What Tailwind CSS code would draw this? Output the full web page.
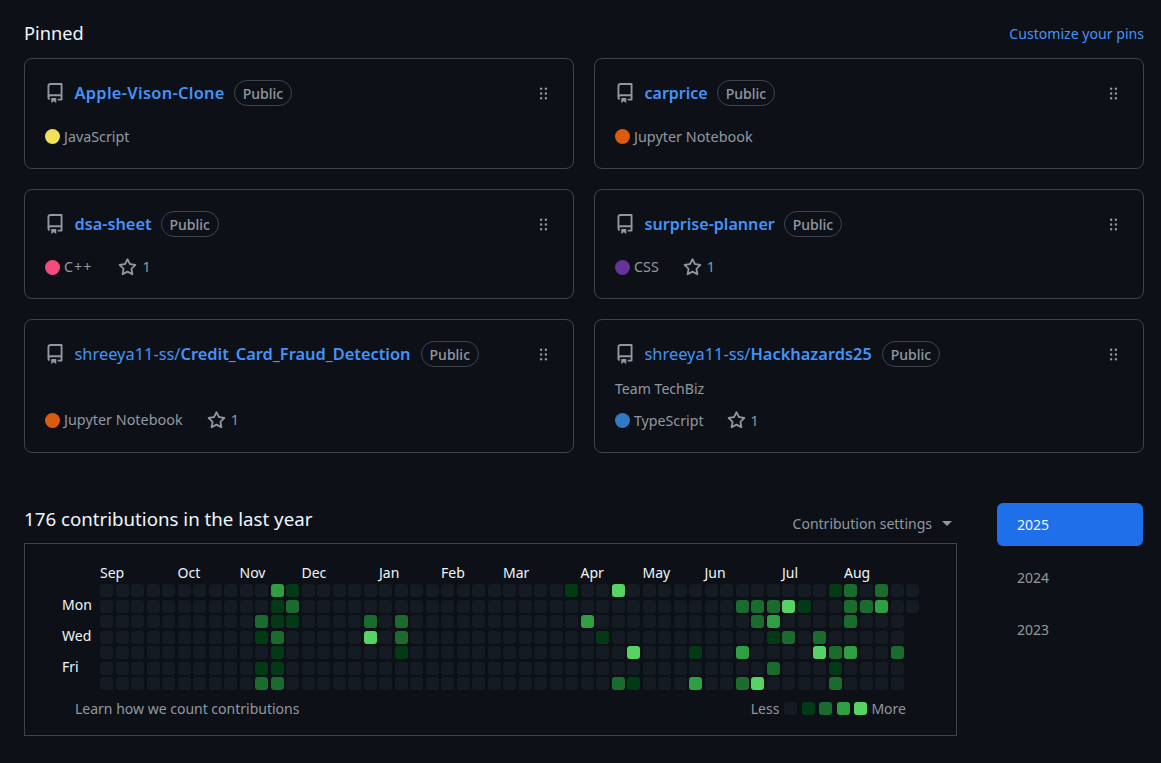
<!DOCTYPE html>
<html lang="en">
<head>
  <meta charset="UTF-8">
  <meta name="viewport" content="width=device-width, initial-scale=1.0">
  <title>Pinned and contributions</title>
  <script src="https://cdn.jsdelivr.net/npm/@tailwindcss/browser@4"></script>
</head>
<body class="bg-[#0d1117] h-[763px] overflow-hidden font-['Noto_Sans',sans-serif] text-[#9198a1]">
  <svg class="hidden">
    <symbol id="repo" viewBox="0 0 16 16"><path fill="currentColor" d="M2 2.5A2.5 2.5 0 0 1 4.5 0h8.75a.75.75 0 0 1 .75.75v12.5a.75.75 0 0 1-.75.75h-2.5a.75.75 0 0 1 0-1.5h1.75v-2h-8a1 1 0 0 0-.714 1.7.75.75 0 1 1-1.072 1.05A2.495 2.495 0 0 1 2 11.5Zm10.5-1h-8a1 1 0 0 0-1 1v6.708A2.486 2.486 0 0 1 4.5 9h8ZM5 12.25a.25.25 0 0 1 .25-.25h3.5a.25.25 0 0 1 .25.25v3.25a.25.25 0 0 1-.4.2l-1.45-1.087a.249.249 0 0 0-.3 0L5.4 15.7a.25.25 0 0 1-.4-.2Z"/></symbol>
    <symbol id="star" viewBox="0 0 16 16"><path fill="currentColor" d="M8 .25a.75.75 0 0 1 .673.418l1.882 3.815 4.21.612a.75.75 0 0 1 .416 1.279l-3.046 2.97.719 4.192a.751.751 0 0 1-1.088.791L8 12.347l-3.766 1.98a.75.75 0 0 1-1.088-.79l.72-4.194L.818 6.374a.75.75 0 0 1 .416-1.28l4.21-.611L7.327.668A.75.75 0 0 1 8 .25Zm0 2.445L6.615 5.5a.75.75 0 0 1-.564.41l-3.097.45 2.24 2.184a.75.75 0 0 1 .216.664l-.528 3.084 2.769-1.456a.75.75 0 0 1 .698 0l2.77 1.456-.53-3.084a.75.75 0 0 1 .216-.664l2.24-2.183-3.096-.45a.75.75 0 0 1-.564-.41L8 2.694Z"/></symbol>
    <symbol id="grip" viewBox="0 0 16 16"><path fill="currentColor" d="M10 13a1 1 0 1 1 0-2 1 1 0 0 1 0 2Zm0-4a1 1 0 1 1 0-2 1 1 0 0 1 0 2Zm-4 4a1 1 0 1 1 0-2 1 1 0 0 1 0 2Zm5-9a1 1 0 1 1-2 0 1 1 0 0 1 2 0ZM7 8a1 1 0 1 1-2 0 1 1 0 0 1 2 0ZM6 5a1 1 0 1 1 0-2 1 1 0 0 1 0 2Z"/></symbol>
  </svg>

  <main class="pl-6 w-[1144px]">
    <div class="flex justify-between items-center h-[58px] pt-[9px]">
      <h2 class="text-[18.2px] text-[#f0f6fc]">Pinned</h2>
      <a class="text-[14.1px] text-[#4493f8]">Customize your pins</a>
    </div>

    <div class="grid grid-cols-2 gap-x-5 gap-y-5">
      <!-- baris 1 -->
      <div class="h-[111px] border border-[#3d444d] rounded-lg px-5 pt-5">
        <div class="flex items-center h-7">
          <svg class="w-5 h-5 mr-[9.5px]"><use href="#repo"/></svg>
          <a class="text-[16.4px] tracking-[0.3px] font-semibold text-[#4493f8]">Apple-Vison-Clone</a>
          <span class="ml-[9px] h-[26px] px-2 flex items-center border border-[#3d444d] rounded-full text-[14px] font-medium">Public</span>
          <svg class="w-[19px] h-[19px] ml-auto"><use href="#grip"/></svg>
        </div>
        <div class="flex items-center h-5 mt-[19.5px] text-[14.3px]">
          <span class="w-[15px] h-[15px] rounded-full bg-[#f1e05a] mr-1"></span>JavaScript
        </div>
      </div>
      <div class="h-[111px] border border-[#3d444d] rounded-lg px-5 pt-5">
        <div class="flex items-center h-7">
          <svg class="w-5 h-5 mr-[9.5px]"><use href="#repo"/></svg>
          <a class="text-[16px] font-semibold text-[#4493f8]">carprice</a>
          <span class="ml-[9px] h-[26px] px-2 flex items-center border border-[#3d444d] rounded-full text-[14px] font-medium">Public</span>
          <svg class="w-[19px] h-[19px] ml-auto"><use href="#grip"/></svg>
        </div>
        <div class="flex items-center h-5 mt-[19.5px] text-[14.4px]">
          <span class="w-[15px] h-[15px] rounded-full bg-[#da5b0b] mr-1"></span>Jupyter Notebook
        </div>
      </div>

      <!-- baris 2 -->
      <div class="h-[110px] border border-[#3d444d] rounded-lg px-5 pt-5">
        <div class="flex items-center h-7">
          <svg class="w-5 h-5 mr-[9.5px]"><use href="#repo"/></svg>
          <a class="text-[16.3px] font-semibold text-[#4493f8]">dsa-sheet</a>
          <span class="ml-[9px] h-[26px] px-2 flex items-center border border-[#3d444d] rounded-full text-[14px] font-medium">Public</span>
          <svg class="w-[19px] h-[19px] ml-auto"><use href="#grip"/></svg>
        </div>
        <div class="flex items-center h-5 mt-[19px] text-[14.3px]">
          <span class="w-[15px] h-[15px] rounded-full bg-[#f34b7d] mr-1"></span><span class="tracking-[1px]">C++</span>
          <svg class="w-[19px] h-[19px] ml-[26px] mr-[5px]"><use href="#star"/></svg>1
        </div>
      </div>
      <div class="h-[110px] border border-[#3d444d] rounded-lg px-5 pt-5">
        <div class="flex items-center h-7">
          <svg class="w-5 h-5 mr-[9.5px]"><use href="#repo"/></svg>
          <a class="text-[16.1px] font-semibold text-[#4493f8]">surprise-planner</a>
          <span class="ml-[9px] h-[26px] px-2 flex items-center border border-[#3d444d] rounded-full text-[14px] font-medium">Public</span>
          <svg class="w-[19px] h-[19px] ml-auto"><use href="#grip"/></svg>
        </div>
        <div class="flex items-center h-5 mt-[19px] text-[14.3px]">
          <span class="w-[15px] h-[15px] rounded-full bg-[#663399] mr-1"></span>CSS
          <svg class="w-[19px] h-[19px] ml-[24px] mr-[5px]"><use href="#star"/></svg>1
        </div>
      </div>

      <!-- baris 3 -->
      <div class="h-[134px] border border-[#3d444d] rounded-lg px-5 pt-5">
        <div class="flex items-center h-7">
          <svg class="w-5 h-5 mr-[9.5px]"><use href="#repo"/></svg>
          <a class="text-[16.4px] text-[#4493f8]">shreeya11-ss/<span class="font-semibold">Credit_Card_Fraud_Detection</span></a>
          <span class="ml-[10px] h-[26px] px-2 flex items-center border border-[#3d444d] rounded-full text-[14px] font-medium">Public</span>
          <svg class="w-[19px] h-[19px] ml-auto"><use href="#grip"/></svg>
        </div>
        <div class="flex items-center h-5 mt-[42px] text-[14.4px]">
          <span class="w-[15px] h-[15px] rounded-full bg-[#da5b0b] mr-1"></span>Jupyter Notebook
          <svg class="w-[19px] h-[19px] ml-[24px] mr-[5px]"><use href="#star"/></svg>1
        </div>
      </div>
      <div class="h-[134px] border border-[#3d444d] rounded-lg px-5 pt-5">
        <div class="flex items-center h-7">
          <svg class="w-5 h-5 mr-[9.5px]"><use href="#repo"/></svg>
          <a class="text-[16.4px] text-[#4493f8]">shreeya11-ss/<span class="font-semibold">Hackhazards25</span></a>
          <span class="ml-[10px] h-[26px] px-2 flex items-center border border-[#3d444d] rounded-full text-[14px] font-medium">Public</span>
          <svg class="w-[19px] h-[19px] ml-auto"><use href="#grip"/></svg>
        </div>
        <p class="h-5 mt-[10.5px] text-[14.1px] leading-5">Team TechBiz</p>
        <div class="flex items-center h-5 mt-[12px] text-[14.2px]">
          <span class="w-[15px] h-[15px] rounded-full bg-[#3178c6] mr-1"></span>TypeScript
          <svg class="w-[19px] h-[19px] ml-[23px] mr-[5px]"><use href="#star"/></svg>1
        </div>
      </div>
    </div>

    <div class="flex mt-[50px]">
      <div class="w-[933px]">
        <div class="flex justify-between items-center h-[40px]">
          <h2 class="text-[18.7px] text-[#f0f6fc] mb-2">176 contributions in the last year</h2>
          <div class="flex items-center text-[14px] mr-[5px]">
            Contribution settings
            <span class="ml-[10px] w-0 h-0 border-x-[5px] border-x-transparent border-t-[5px] border-t-[#9198a1]"></span>
          </div>
        </div>
        <div class="h-[193px] border border-[#3d444d] pt-[19px]">
          <div class="flex">
            <div class="w-[75px] shrink-0 pt-[34px] text-[14px] text-[#f0f6fc] pl-[37px]">
              <div class="h-[15.5px] leading-[15.5px] mb-[15.5px]">Mon</div>
              <div class="h-[15.5px] leading-[15.5px] mb-[15.5px]">Wed</div>
              <div class="h-[15.5px] leading-[15.5px]">Fri</div>
            </div>
            <div>
              <div class="grid grid-cols-[repeat(53,13px)] gap-x-[2.5px] h-[21px] text-[14px] leading-5 text-[#f0f6fc] whitespace-nowrap">
                <span class="col-start-[1]">Sep</span>
                <span class="col-start-[6]">Oct</span>
                <span class="col-start-[10]">Nov</span>
                <span class="col-start-[14]">Dec</span>
                <span class="col-start-[19]">Jan</span>
                <span class="col-start-[23]">Feb</span>
                <span class="col-start-[27]">Mar</span>
                <span class="col-start-[32]">Apr</span>
                <span class="col-start-[36]">May</span>
                <span class="col-start-[40]">Jun</span>
                <span class="col-start-[45]">Jul</span>
                <span class="col-start-[49]">Aug</span>
              </div>
              <div id="graph" class="grid grid-flow-col grid-rows-[repeat(7,13px)] grid-cols-[repeat(53,13px)] gap-x-[2.5px] gap-y-[2.5px]"></div>
            </div>
          </div>
          <div class="flex justify-between items-center text-[14px] h-5 mt-2 pl-[50px] pr-[50px]">
            <span>Learn how we count contributions</span>
            <div class="flex items-center">
              <span class="mr-[5px]">Less</span>
              <span class="w-[13px] h-[13px] rounded-[3px] bg-[#151b23] mr-[4.5px]"></span>
              <span class="w-[13px] h-[13px] rounded-[3px] bg-[#033a16] mr-[4.5px]"></span>
              <span class="w-[13px] h-[13px] rounded-[3px] bg-[#196c2e] mr-[4.5px]"></span>
              <span class="w-[13px] h-[13px] rounded-[3px] bg-[#2ea043] mr-[4.5px]"></span>
              <span class="w-[13px] h-[13px] rounded-[3px] bg-[#56d364]"></span>
              <span class="ml-[4px]">More</span>
            </div>
          </div>
        </div>
      </div>

      <nav class="ml-[40px] w-[146px] text-[14px]">
        <a class="flex items-center h-[43px] pl-5 rounded-md bg-[#1f6feb] text-[#f0f6fc]">2025</a>
        <a class="flex items-center h-[43px] pl-5 mt-[10px]">2024</a>
        <a class="flex items-center h-[43px] pl-5 mt-[9px]">2023</a>
      </nav>
    </div>
  </main>

  <script>
    // warna per level
    const warna = [
      "bg-[#151b23]",
      "bg-[#033a16]",
      "bg-[#196c2e]",
      "bg-[#2ea043]",
      "bg-[#56d364]"
    ];

    // [kolom, level] per baris hari
    const data = [
      [[11,3],[12,1],[30,1],[33,4],[47,1],[48,2],[50,2]],
      [[11,1],[12,2],[41,2],[42,2],[43,2],[44,4],[45,1],[48,2],[49,2],[50,3]],
      [[10,2],[11,1],[12,1],[17,2],[19,2],[31,3],[42,2],[43,3],[48,2]],
      [[10,1],[11,2],[17,4],[19,2],[32,1],[43,1],[44,2],[46,2]],
      [[11,1],[19,1],[34,4],[38,1],[41,3],[46,4],[47,2],[48,3],[51,2]],
      [[10,1],[11,1],[43,2],[47,1]],
      [[10,2],[11,2],[33,2],[34,1],[38,3],[41,2],[42,4],[47,2]]
    ];

    const graph = document.getElementById("graph");
    for (let kol = 0; kol < 53; kol++) {
      const jumlah = kol === 52 ? 2 : 7;
      for (let hari = 0; hari < jumlah; hari++) {
        const isi = data[hari].find(d => d[0] === kol);
        const cell = document.createElement("div");
        cell.className = "rounded-[3px] " + warna[isi ? isi[1] : 0];
        graph.appendChild(cell);
      }
    }
  </script>
</body>
</html>
